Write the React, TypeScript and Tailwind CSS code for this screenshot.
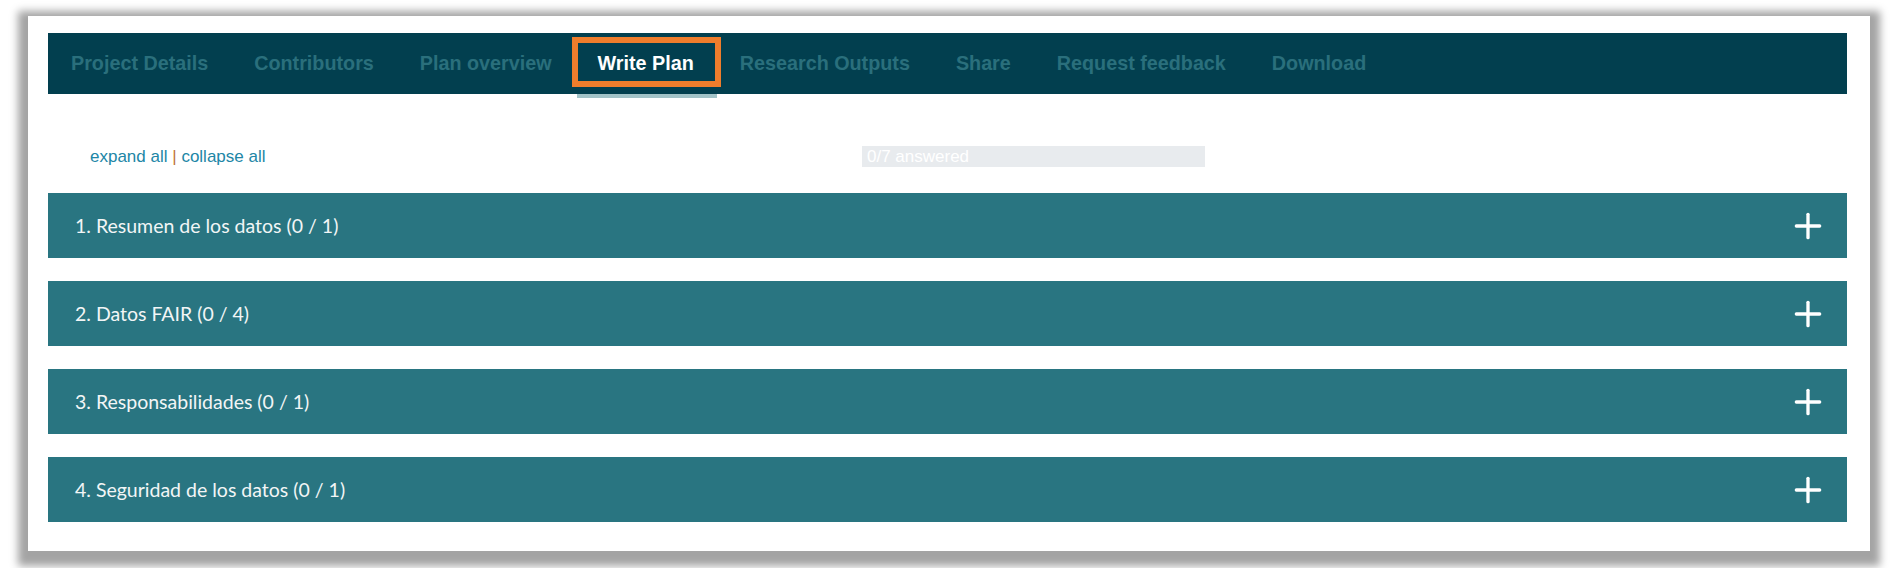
import { Plus } from 'lucide-react'

const tabs = [
  'Project Details',
  'Contributors',
  'Plan overview',
  'Write Plan',
  'Research Outputs',
  'Share',
  'Request feedback',
  'Download',
]

const sections = [
  '1. Resumen de los datos (0 / 1)',
  '2. Datos FAIR (0 / 4)',
  '3. Responsabilidades (0 / 1)',
  '4. Seguridad de los datos (0 / 1)',
]

function NavTabs({ active }: { active: string }) {
  return (
    <nav className="flex h-[61px] bg-[#023f4f] font-['Liberation_Sans',Arial,sans-serif] text-[19.75px] font-bold">
      {tabs.map((t) => (
        <div
          key={t}
          className={
            t === active
              ? 'relative flex items-center px-[23px] text-white'
              : 'flex items-center px-[23px] text-[#2a6f7c]'
          }
        >
          {t}
          {t === active && (
            <>
              <span className="absolute left-[2px] right-0 -bottom-[4px] h-[4px] bg-[#a2c3c8]" />
              <span className="absolute -left-[3px] -right-[4px] top-[4px] bottom-[7px] border-[6px] border-[#ef7d2c]" />
            </>
          )}
        </div>
      ))}
    </nav>
  )
}

function Section({ title }: { title: string }) {
  return (
    <div className="flex h-[65px] items-center justify-between bg-[#297581] pl-[27px] pr-[19px]">
      <span className="font-['Lato',sans-serif] text-[19.5px] text-[#f2f5f6]">{title}</span>
      <Plus className="h-[40px] w-[40px] text-white" strokeWidth={2} />
    </div>
  )
}

export default function App() {
  return (
    <div className="h-[568px] w-[1900px] overflow-hidden bg-white pt-[16px] pl-[28px]">
      <div className="h-[535px] w-[1842px] bg-white pt-[17px] pl-[20px] pr-[23px] shadow-[0_5px_8px_10px_rgba(0,0,0,0.36)]">
        <NavTabs active="Write Plan" />

        <div className="mt-[52px] flex h-[21px] items-center font-['Liberation_Sans',Arial,sans-serif]">
          <div className="w-[814px] pl-[42px] text-[17px] text-[#2186a6]">
            <a href="#">expand all</a>
            <span className="text-[#c0753a]"> | </span>
            <a href="#">collapse all</a>
          </div>
          <div className="flex h-[21px] w-[343px] items-center bg-[#e8ebee] pl-[5px] text-[17px] text-white">
            0/7 answered
          </div>
        </div>

        <div className="mt-[26px] flex flex-col gap-[23px]">
          {sections.map((s) => (
            <Section key={s} title={s} />
          ))}
        </div>
      </div>
    </div>
  )
}
